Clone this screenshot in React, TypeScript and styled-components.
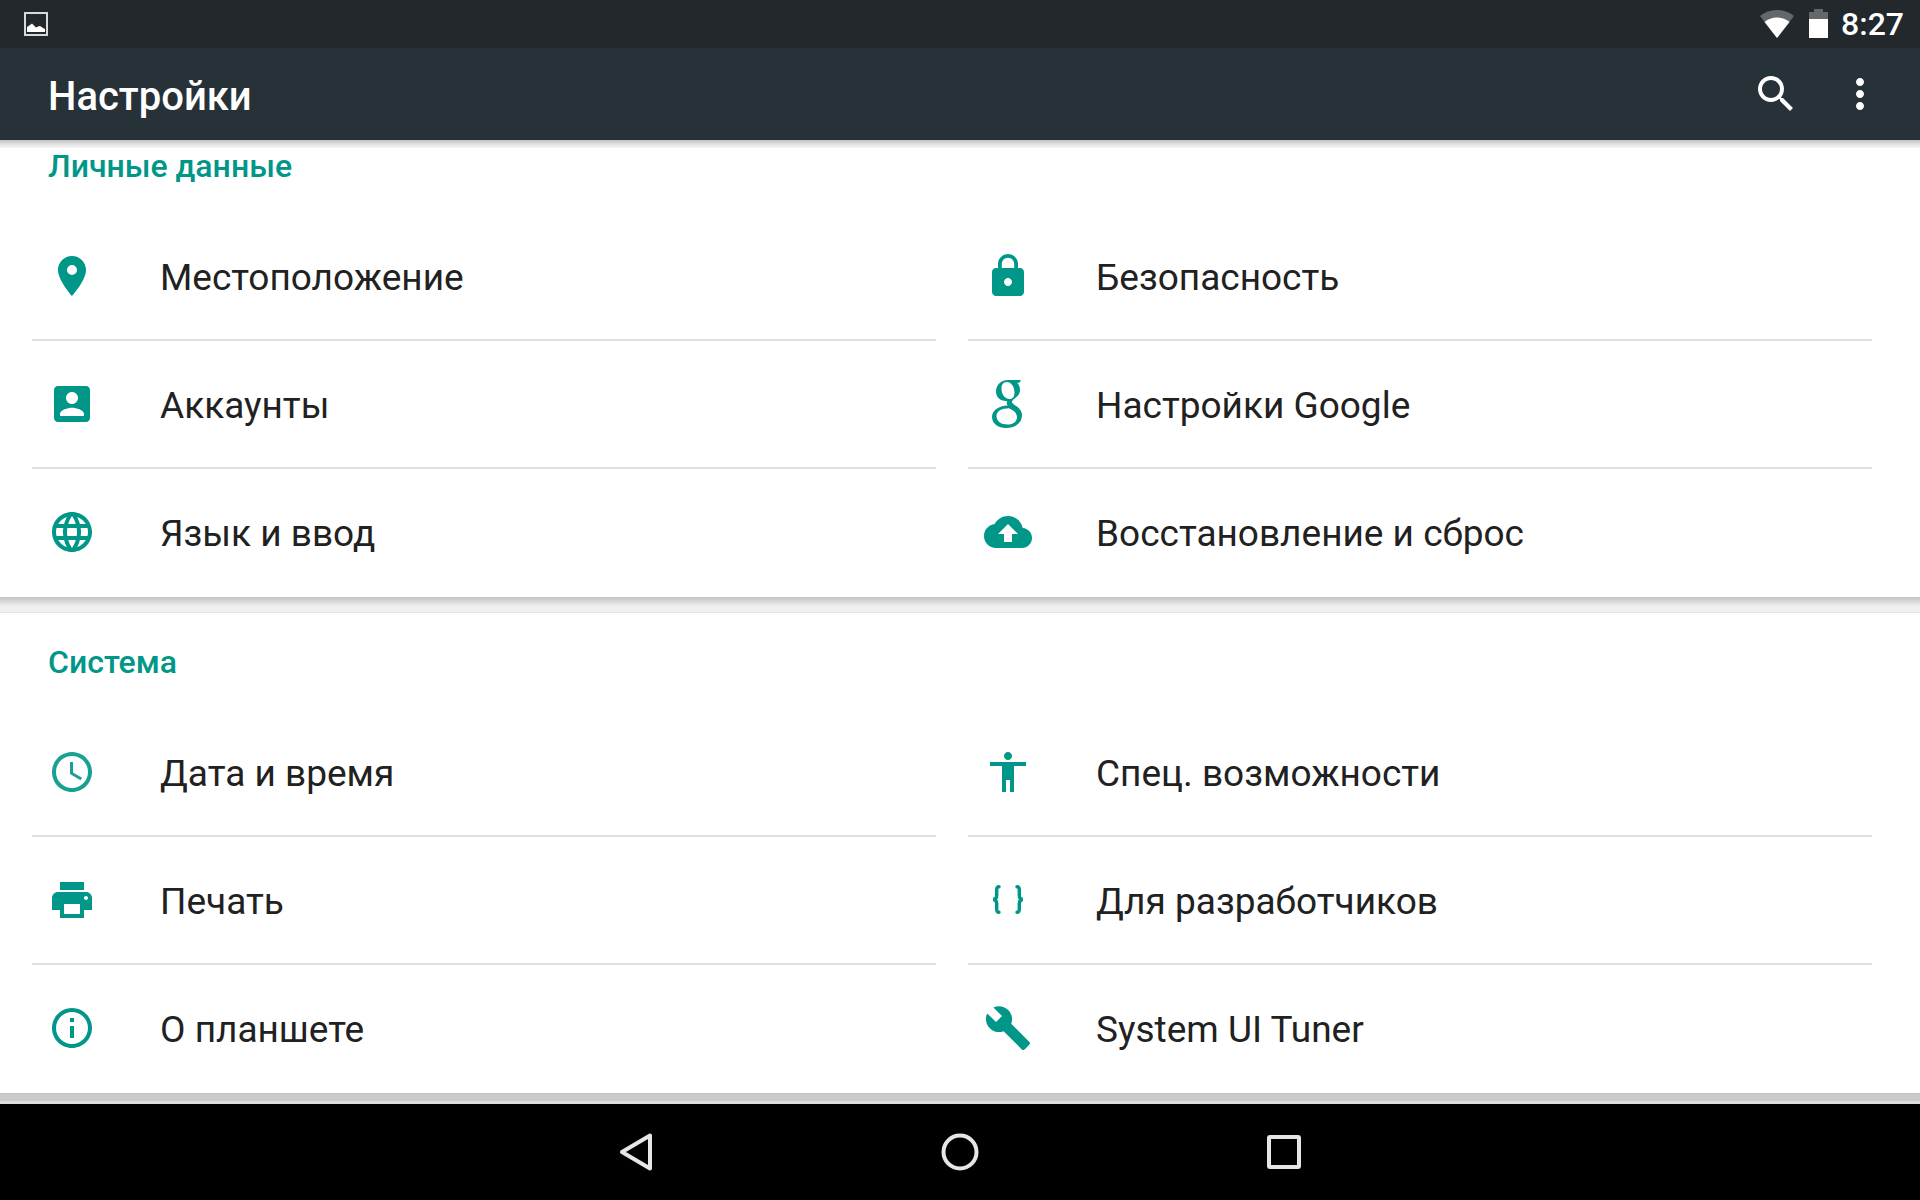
import React from 'react';
import styled, { createGlobalStyle } from 'styled-components';

const TEAL = '#009688';

const GlobalStyle = createGlobalStyle`
  *, *::before, *::after { box-sizing: border-box; }
  body { margin: 0; font-family: Roboto, "Noto Sans", sans-serif; }
  button { border: 0; padding: 0; background: none; font: inherit; color: inherit; cursor: pointer; }
`;

const Screen = styled.div`
  display: flex;
  flex-direction: column;
  height: 100vh;
  background: #eeeeee;
`;

const StatusBar = styled.div`
  flex: none;
  display: flex;
  align-items: center;
  height: 48px;
  padding: 0 16px 0 24px;
  background: #22282c;
  color: #fff;
`;

const StatusIcons = styled.div`
  display: flex;
  align-items: center;
  margin-left: auto;
`;

const Clock = styled.time`
  margin-left: 12px;
  font-size: 32px;
  font-weight: 500;
  line-height: 48px;
`;

const WifiSlot = styled.span`
  display: flex;
  margin-right: 14px;
`;

const Toolbar = styled.header`
  position: relative;
  z-index: 1;
  flex: none;
  display: flex;
  align-items: center;
  height: 92px;
  padding: 0 36px 0 48px;
  background: #273238;
  color: #fff;

  &::after {
    content: '';
    position: absolute;
    top: 100%;
    left: 0;
    right: 0;
    height: 8px;
    background: linear-gradient(rgba(0, 0, 0, 0.24), rgba(0, 0, 0, 0.1) 60%, rgba(0, 0, 0, 0.04));
  }
`;

const Title = styled.h1`
  flex: 1;
  margin: 0;
  padding-top: 6px;
  font-size: 40px;
  font-weight: 500;
  line-height: 48px;
`;

const ToolbarActions = styled.div`
  display: flex;
  gap: 36px;
`;

const ToolButton = styled.button`
  display: flex;
  width: 48px;
  height: 48px;
`;

const List = styled.main`
  flex: 1;
  min-height: 0;
  display: flex;
  flex-direction: column;
  justify-content: flex-end;
  overflow: hidden;
`;

const Section = styled.section`
  flex: none;
  background: #fff;
`;

const SectionTitle = styled.h2`
  height: 96px;
  margin: 0;
  padding: 28px 48px 0;
  color: ${TEAL};
  font-size: 32px;
  font-weight: 500;
  line-height: 42px;
`;

const Grid = styled.div`
  display: grid;
  grid-template-columns: 1fr 1fr;
  column-gap: 32px;
  padding: 0 48px 0 32px;
`;

const Tile = styled.button<{ $last: boolean }>`
  display: flex;
  align-items: center;
  gap: 64px;
  height: 128px;
  padding: 0 16px;
  border-bottom: 2px solid ${(p) => (p.$last ? 'transparent' : '#e0e0e0')};
  color: #212121;
  text-align: left;
`;

const TileLabel = styled.span`
  padding-top: 4px;
  font-size: 37px;
  line-height: 44px;
`;

const Divider = styled.div`
  flex: none;
  height: 16px;
  border-bottom: 1px solid #e2e2e2;
  background: linear-gradient(#c4c4c4, #d6d6d6 4px, #e4e4e4 7px, #f0f0f0 9px);
`;

const ListEnd = styled.div`
  flex: none;
  height: 11px;
  border-top: 1px solid #c2c2c2;
  border-bottom: 3px solid #dcdcdc;
  background: #cacaca;
`;

const NavBar = styled.nav`
  flex: none;
  display: flex;
  justify-content: center;
  gap: 276px;
  height: 96px;
  background: #000;
`;

const NavButton = styled.button`
  display: flex;
  align-items: center;
  justify-content: center;
  width: 48px;
`;

const Icon = ({ d, opacity }: { d: string; opacity?: number }) => (
  <svg width="48" height="48" viewBox="0 0 24 24" fill={TEAL} fillOpacity={opacity} aria-hidden="true">
    <path d={d} />
  </svg>
);

const GoogleIcon = () => (
  <svg width="48" height="48" viewBox="0 0 48 48" fill={TEAL} fillRule="evenodd" aria-hidden="true">
    <path d="M37 0H24C16.500 0 12 5.500 12 11.500c0 5.500 4 9.500 10 9.500h1.200c-.6 1.200-.8 2.800.5 4.500C14 26 8 30.500 8 37c0 6.500 6 11 14 11 9.500 0 16-5.500 16-12.500 0-4.500-2.500-7-5.500-9.200-3-2.200-4.500-3-4.500-4.300 0-1.300 1-2 3-3.700 3-2.500 5-4.300 5-8.300 0-3.500-1.200-5.700-3-7.300h2.500zM23 2c4.500 0 7.500 5.500 7.500 10.200 0 4-1.500 6.800-5 6.800-5 0-8-5-8-10.200C17.500 4.800 19 2 23 2zM25 28.200c5 2.300 8 5 8 9s-3.500 7.300-9.500 7.300c-6.500 0-11-3.500-11-8.500s5-7.800 12.500-7.800z" />
  </svg>
);

const BracesIcon = () => (
  <svg width="48" height="48" viewBox="0 0 48 48" fill="none" stroke={TEAL} strokeWidth="3.4" strokeLinecap="round" aria-hidden="true">
    <path d="M15 10.700c-1.600 0-2.300 1-2.300 3v5.800c0 2.500-1 4-3.700 4 2.700 0 3.700 1.500 3.700 4v5.800c0 2 .7 3 2.300 3M33 10.700c1.600 0 2.300 1 2.300 3v5.800c0 2.500 1 4 3.700 4-2.700 0-3.700 1.500-3.700 4v5.800c0 2-.7 3-2.300 3" />
  </svg>
);

type Item = { label: string; icon: React.ReactNode };

const personal: Item[] = [
  { label: 'Местоположение', icon: <Icon d="M12 2C8.130 2 5 5.130 5 9c0 5.250 7 13 7 13s7-7.750 7-13c0-3.870-3.130-7-7-7zm0 9.500a2.500 2.500 0 0 1 0-5 2.500 2.500 0 0 1 0 5z" /> },
  { label: 'Безопасность', icon: <Icon d="M18 8h-1V6c0-2.760-2.240-5-5-5S7 3.240 7 6v2H6c-1.100 0-2 .9-2 2v10c0 1.100.9 2 2 2h12c1.100 0 2-.9 2-2V10c0-1.100-.9-2-2-2zm-6 9c-1.100 0-2-.9-2-2s.9-2 2-2 2 .9 2 2-.9 2-2 2zm3.100-9H8.900V6c0-1.710 1.390-3.100 3.100-3.100s3.100 1.390 3.100 3.100v2z" /> },
  { label: 'Аккаунты', icon: <Icon d="M3 5v14c0 1.100.89 2 2 2h14c1.100 0 2-.9 2-2V5c0-1.100-.9-2-2-2H5c-1.110 0-2 .9-2 2zm12 4c0 1.660-1.340 3-3 3s-3-1.340-3-3 1.340-3 3-3 3 1.340 3 3zm-9 8c0-2 4-3.100 6-3.100s6 1.100 6 3.100v1H6v-1z" /> },
  { label: 'Настройки Google', icon: <GoogleIcon /> },
  { label: 'Язык и ввод', icon: <Icon d="M11.990 2C6.470 2 2 6.480 2 12s4.470 10 9.990 10C17.520 22 22 17.520 22 12S17.520 2 11.990 2zm6.930 6h-2.950c-.32-1.250-.78-2.450-1.380-3.560 1.840.63 3.370 1.910 4.330 3.560zM12 4.040c.83 1.200 1.480 2.530 1.910 3.960h-3.820c.43-1.430 1.080-2.760 1.910-3.960zM4.260 14C4.100 13.360 4 12.690 4 12s.1-1.360.26-2h3.380c-.08.66-.14 1.320-.14 2 0 .68.06 1.340.14 2H4.260zm.82 2h2.950c.32 1.250.78 2.450 1.380 3.560-1.840-.63-3.370-1.900-4.330-3.560zm2.950-8H5.080c.96-1.660 2.490-2.930 4.330-3.560C8.810 5.550 8.350 6.750 8.030 8zM12 19.960c-.83-1.200-1.480-2.530-1.910-3.960h3.820c-.43 1.430-1.080 2.760-1.910 3.960zM14.340 14H9.660c-.09-.66-.16-1.320-.16-2 0-.68.07-1.350.16-2h4.680c.09.65.16 1.320.16 2 0 .68-.07 1.340-.16 2zm.25 5.560c.6-1.110 1.060-2.310 1.380-3.560h2.950c-.96 1.650-2.490 2.930-4.330 3.560zM16.360 14c.08-.66.14-1.320.14-2 0-.68-.06-1.340-.14-2h3.380c.16.640.26 1.310.26 2s-.1 1.360-.26 2h-3.380z" /> },
  { label: 'Восстановление и сброс', icon: <Icon d="M19.350 10.040C18.670 6.590 15.640 4 12 4 9.110 4 6.600 5.640 5.350 8.040 2.340 8.360 0 10.910 0 14c0 3.310 2.690 6 6 6h13c2.760 0 5-2.240 5-5 0-2.640-2.050-4.780-4.650-4.960zM14 13v4h-4v-4H7l5-5 5 5h-3z" /> },
];

const system: Item[] = [
  { label: 'Дата и время', icon: <Icon opacity={0.9} d="M11.990 2C6.470 2 2 6.480 2 12s4.470 10 9.990 10C17.520 22 22 17.520 22 12S17.520 2 11.990 2zM12 20c-4.420 0-8-3.580-8-8s3.580-8 8-8 8 3.580 8 8-3.580 8-8 8zm.5-13H11v6l5.250 3.150.75-1.230-4.500-2.670z" /> },
  { label: 'Спец. возможности', icon: <Icon d="M12 2c1.100 0 2 .9 2 2s-.9 2-2 2-2-.9-2-2 .9-2 2-2zm9 7h-6v13h-2v-6h-2v6H9V9H3V7h18v2z" /> },
  { label: 'Печать', icon: <Icon d="M19 8H5c-1.660 0-3 1.340-3 3v6h4v4h12v-4h4v-6c0-1.660-1.340-3-3-3zm-3 11H8v-5h8v5zm3-7c-.55 0-1-.45-1-1s.45-1 1-1 1 .45 1 1-.45 1-1 1zm-1-9H6v4h12V3z" /> },
  { label: 'Для разработчиков', icon: <BracesIcon /> },
  { label: 'О планшете', icon: <Icon d="M11 17h2v-6h-2v6zm1-15C6.480 2 2 6.480 2 12s4.480 10 10 10 10-4.480 10-10S17.520 2 12 2zm0 18c-4.410 0-8-3.590-8-8s3.590-8 8-8 8 3.590 8 8-3.590 8-8 8zM11 9h2V7h-2v2z" /> },
  { label: 'System UI Tuner', icon: <Icon d="M22.700 19l-9.100-9.100c.9-2.300.4-5-1.500-6.900-2-2-5-2.400-7.400-1.300L9 6 6 9 1.600 4.700C.4 7.100.9 10.100 2.900 12.100c1.900 1.900 4.600 2.400 6.900 1.500l9.100 9.100c.4.4 1 .4 1.400 0l2.300-2.300c.5-.4.5-1.100.1-1.400z" /> },
];

const Tiles = ({ title, items }: { title: string; items: Item[] }) => (
  <Section>
    <SectionTitle>{title}</SectionTitle>
    <Grid>
      {items.map((item, i) => (
        <Tile key={item.label} type="button" $last={i >= items.length - 2}>
          {item.icon}
          <TileLabel>{item.label}</TileLabel>
        </Tile>
      ))}
    </Grid>
  </Section>
);

export default function App() {
  return (
    <Screen>
      <GlobalStyle />
      <StatusBar>
        <svg width="24" height="24" viewBox="0 0 24 24" aria-hidden="true">
          <rect x="1" y="1" width="22" height="22" fill="none" stroke="#d9d9d9" strokeWidth="2" />
          <path d="M3 20v-5l3-2 2-1.500 4 4 2-1 2-.5 3 2 2 1v3z" fill="#fff" />
        </svg>
        <StatusIcons>
          <WifiSlot>
            <svg width="36" height="30" viewBox="0 0 36 30" fill="#fff" aria-hidden="true">
              <path d="M18 29L1 7C10-1 26-1 35 7z" fillOpacity="0.3" />
              <path d="M18 29L5.500 13c7-6 18-6 25 0z" />
            </svg>
          </WifiSlot>
          <svg width="20" height="30" viewBox="0 0 20 30" fill="#fff" aria-hidden="true">
            <path d="M0 10V3h5V0h9v3h5v7z" fillOpacity="0.3" />
            <path d="M0 10h19v19H0z" />
          </svg>
          <Clock>8:27</Clock>
        </StatusIcons>
      </StatusBar>
      <Toolbar>
        <Title>Настройки</Title>
        <ToolbarActions>
          <ToolButton type="button" aria-label="Поиск">
            <svg width="48" height="48" viewBox="0 0 24 24" fill="#fff">
              <path d="M15.500 14h-.79l-.28-.27C15.410 12.590 16 11.110 16 9.500 16 5.910 13.090 3 9.500 3S3 5.910 3 9.500 5.910 16 9.500 16c1.610 0 3.090-.59 4.230-1.570l.27.28v.79l5 4.990L20.490 19l-4.990-5zm-6 0C7.010 14 5 11.990 5 9.500S7.010 5 9.500 5 14 7.010 14 9.500 11.990 14 9.500 14z" />
            </svg>
          </ToolButton>
          <ToolButton type="button" aria-label="Ещё">
            <svg width="48" height="48" viewBox="0 0 24 24" fill="#fff">
              <path d="M12 8c1.100 0 2-.9 2-2s-.9-2-2-2-2 .9-2 2 .9 2 2 2zm0 2c-1.100 0-2 .9-2 2s.9 2 2 2 2-.9 2-2-.9-2-2-2zm0 6c-1.100 0-2 .9-2 2s.9 2 2 2 2-.9 2-2-.9-2-2-2z" />
            </svg>
          </ToolButton>
        </ToolbarActions>
      </Toolbar>
      <List>
        <Tiles title="Личные данные" items={personal} />
        <Divider />
        <Tiles title="Система" items={system} />
        <ListEnd />
      </List>
      <NavBar>
        <NavButton type="button" aria-label="Назад">
          <svg width="48" height="48" viewBox="0 0 48 48" fill="none" stroke="#e6e6e6" strokeWidth="4" strokeLinejoin="round">
            <path d="M38 7.500v33L10 24z" />
          </svg>
        </NavButton>
        <NavButton type="button" aria-label="Главный экран">
          <svg width="48" height="48" viewBox="0 0 48 48" fill="none" stroke="#e6e6e6" strokeWidth="4">
            <circle cx="24" cy="24" r="16.500" />
          </svg>
        </NavButton>
        <NavButton type="button" aria-label="Обзор">
          <svg width="48" height="48" viewBox="0 0 48 48" fill="none" stroke="#e6e6e6" strokeWidth="4">
            <rect x="9" y="9" width="30" height="30" rx="1" />
          </svg>
        </NavButton>
      </NavBar>
    </Screen>
  );
}
